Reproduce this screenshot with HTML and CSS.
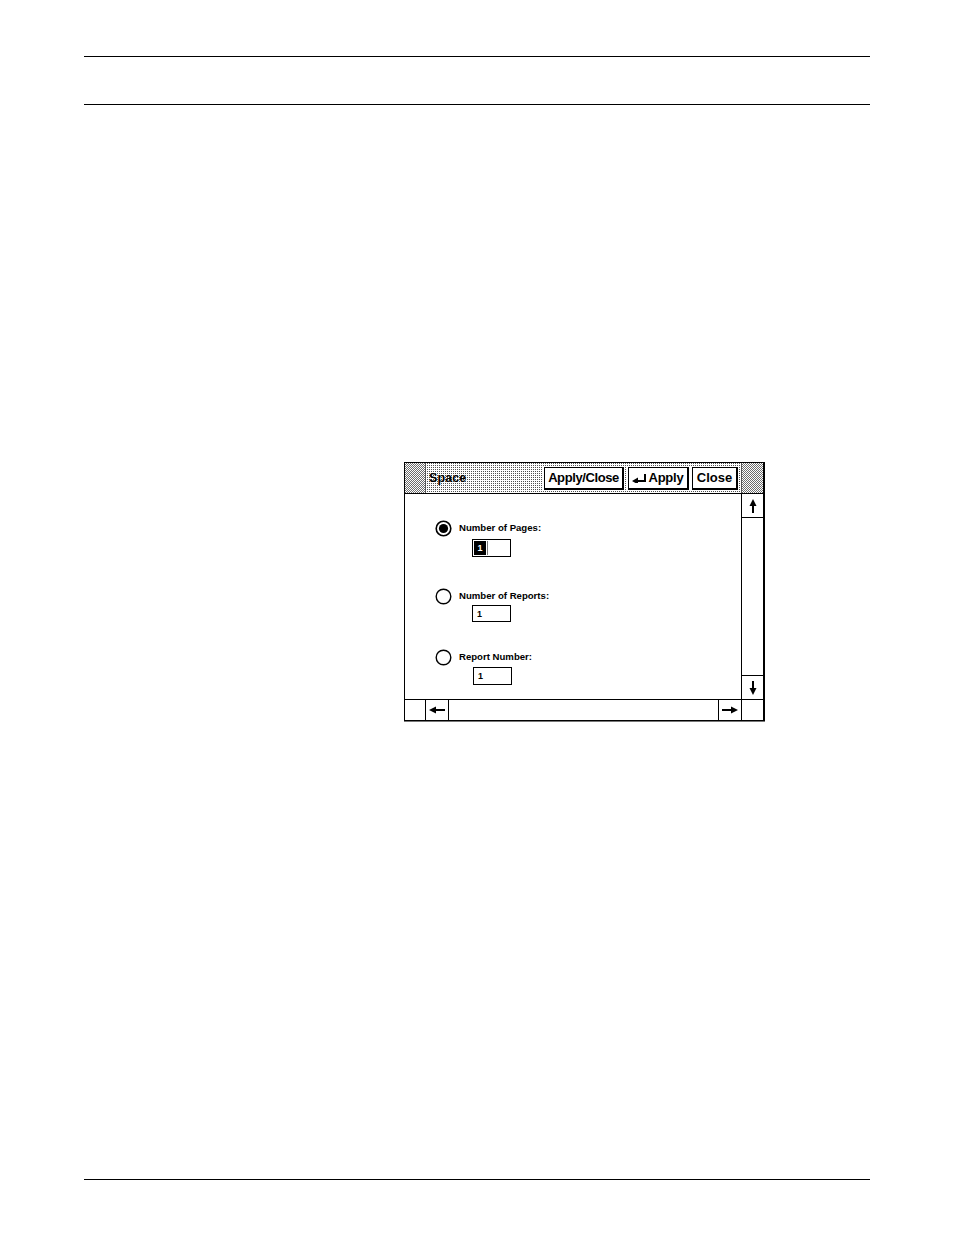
FILE: index.html
```html
<!DOCTYPE html>
<html>
<head>
<meta charset="utf-8">
<title>Space</title>
<link rel="stylesheet" href="styles.css">
</head>
<body>
<div class="page">
  <div class="rule rule-top"></div>
  <div class="rule rule-second"></div>
  <div class="figure">
    <div class="dialog">
      <div class="titlebar">
        <div class="tcorner tcorner-l"></div>
        <div class="title">
          <span class="title-text">Space</span>
          <div class="buttons">
            <span class="btn btn-applyclose">Apply/Close</span>
            <span class="btn btn-apply"><svg class="ret" width="15" height="9" viewBox="0 0 15 9"><rect x="12" y="0" width="2" height="8" fill="#000"/><rect x="5" y="6" width="9" height="2" fill="#000"/><polygon points="0,7 6,3.5 6,10.5" fill="#000"/></svg>Apply</span>
            <span class="btn btn-close">Close</span>
          </div>
        </div>
        <div class="tcorner tcorner-r"></div>
      </div>
      <div class="middle">
        <div class="content">
          <div class="option opt-1">
            <div class="opt-row">
              <svg class="radio" width="17" height="17" viewBox="0 0 17 17"><circle cx="8.5" cy="8.5" r="7.3" fill="#fff" stroke="#000" stroke-width="1.6"/><circle cx="8.5" cy="8.5" r="4.6" fill="#000"/></svg>
              <span class="opt-label">Number of Pages:</span>
            </div>
            <div class="field field-1"><span class="sel">1</span><span class="rest"></span></div>
          </div>
          <div class="option opt-2">
            <div class="opt-row">
              <svg class="radio" width="17" height="17" viewBox="0 0 17 17"><circle cx="8.5" cy="8.5" r="7.3" fill="#fff" stroke="#000" stroke-width="1.4"/></svg>
              <span class="opt-label">Number of Reports:</span>
            </div>
            <div class="field"><span class="val">1</span></div>
          </div>
          <div class="option opt-3">
            <div class="opt-row">
              <svg class="radio" width="17" height="17" viewBox="0 0 17 17"><circle cx="8.5" cy="8.5" r="7.3" fill="#fff" stroke="#000" stroke-width="1.4"/></svg>
              <span class="opt-label">Report Number:</span>
            </div>
            <div class="field field-3"><span class="val">1</span></div>
          </div>
        </div>
        <div class="vscroll">
          <div class="sbox sbox-up"><svg width="8" height="14" viewBox="0 0 8 14"><polygon points="4,0 0.5,7 7.5,7" fill="#000"/><rect x="3" y="6" width="2" height="8" fill="#000"/></svg></div>
          <div class="strack"></div>
          <div class="sbox sbox-down"><svg width="8" height="14" viewBox="0 0 8 14"><polygon points="4,14 0.5,7 7.5,7" fill="#000"/><rect x="3" y="0" width="2" height="8" fill="#000"/></svg></div>
        </div>
      </div>
      <div class="hscroll">
        <div class="hcell hcell-l"></div>
        <div class="hcell harrow"><svg width="16" height="8" viewBox="0 0 16 8"><polygon points="0,4 7,0.5 7,7.5" fill="#000"/><rect x="6" y="3" width="10" height="2" fill="#000"/></svg></div>
        <div class="htrack"></div>
        <div class="hcell harrow harrow-r"><svg width="16" height="8" viewBox="0 0 16 8"><polygon points="16,4 9,0.5 9,7.5" fill="#000"/><rect x="0" y="3" width="10" height="2" fill="#000"/></svg></div>
        <div class="hcell hcell-r"></div>
      </div>
    </div>
  </div>
  <div class="rule rule-bottom"></div>
</div>
</body>
</html>
```
FILE: styles.css
```css
html, body {
  margin: 0;
  padding: 0;
  background: #fff;
}
body {
  font-family: "Liberation Sans", Arial, sans-serif;
  color: #000;
}
.page {
  width: 786px;
  height: 1235px;
  margin-left: 84px;
  display: flex;
  flex-direction: column;
}
.rule {
  height: 0;
  border-top: 1px solid #000;
}
.rule-top { margin-top: 56px; }
.rule-second { margin-top: 47px; }
.rule-bottom { margin-top: auto; margin-bottom: 55px; }

.figure {
  margin-top: 357px;
  margin-left: 320px;
}
.dialog {
  width: 358px;
  border: 1px solid #000;
  border-right-width: 2px;
  box-shadow: 0 1px 0 #777;
  background: #fff;
}
.titlebar {
  display: flex;
  height: 30px;
  border-bottom: 1px solid #000;
}
.tcorner {
  background-color: #fff;
  background-image: conic-gradient(#6e6e6e 0 25%, #fff 0 50%, #6e6e6e 0 75%, #fff 0);
  background-size: 2px 2px;
}
.tcorner-l { width: 20px; border-right: 1px solid #555; }
.tcorner-r { width: 21px; border-left: 1px solid #555; }
.title {
  flex: 1;
  display: flex;
  align-items: center;
  justify-content: space-between;
  padding: 0 3px 0 3px;
  background-color: #fff;
  background-image: conic-gradient(#505050 0 25%, #fff 0);
  background-size: 2px 2px;
}
.title-text {
  font-weight: bold;
  font-size: 12.5px;
  letter-spacing: 0.1px;
  margin-top: 0;
}
.buttons {
  display: flex;
  gap: 3px;
}
.btn {
  display: flex;
  align-items: center;
  justify-content: center;
  box-sizing: border-box;
  height: 23px;
  background: #fff;
  border: 1px solid #000;
  border-right-width: 2px;
  border-bottom-width: 2px;
  outline: 1px solid #fff;
  font-weight: bold;
  font-size: 13px;
  padding-bottom: 1px;
}
.btn-applyclose { width: 80px; letter-spacing: -0.4px; }
.btn-apply { width: 61px; margin-left: 1px; letter-spacing: -0.2px; }
.btn-close { width: 46px; }
.ret { margin-right: 1px; margin-top: 3px; }

.middle {
  display: flex;
  height: 205px;
  border-bottom: 1px solid #000;
}
.content {
  flex: 1;
  padding-left: 30px;
}
.option {
  display: flex;
  flex-direction: column;
}
.opt-1 { margin-top: 26px; }
.opt-2 { margin-top: 31px; }
.opt-3 { margin-top: 27px; }
.opt-row {
  display: flex;
  align-items: center;
  gap: 7px;
  height: 17px;
}
.radio { display: block; }
.opt-label {
  font-weight: bold;
  font-size: 9.6px;
  letter-spacing: 0;
  margin-top: -2px;
}
.field {
  box-sizing: border-box;
  width: 39px;
  height: 18px;
  margin-left: 37px;
  margin-top: 2px;
  border: 1px solid #000;
  display: flex;
  align-items: center;
}
.opt-2 .field { height: 17px; margin-top: 0; }
.field-3 { margin-left: 38px; margin-top: 1px; }
.field-1 { align-items: stretch; padding: 1px; }
.sel {
  width: 12px;
  background: #000;
  color: #fff;
  font-weight: bold;
  font-size: 9px;
  display: flex;
  align-items: center;
  justify-content: center;
}
.rest {
  flex: 1;
  border-left: 1px solid #777;
  margin-left: 1px;
}
.val {
  font-weight: bold;
  font-size: 9px;
  margin-left: 4px;
}
.vscroll {
  width: 21px;
  border-left: 1px solid #000;
  display: flex;
  flex-direction: column;
}
.sbox {
  height: 23px;
  display: flex;
  align-items: center;
  justify-content: center;
}
.sbox-up { border-bottom: 1px solid #000; }
.sbox-down { border-top: 1px solid #000; }
.strack { flex: 1; }

.hscroll {
  display: flex;
  height: 20px;
}
.hcell {
  display: flex;
  align-items: center;
  justify-content: center;
}
.hcell-l { width: 20px; border-right: 1px solid #000; }
.harrow { width: 22px; border-right: 1px solid #000; }
.harrow-r { border-right: 1px solid #000; border-left: 1px solid #000; }
.htrack { flex: 1; }
.hcell-r { width: 21px; }
```
